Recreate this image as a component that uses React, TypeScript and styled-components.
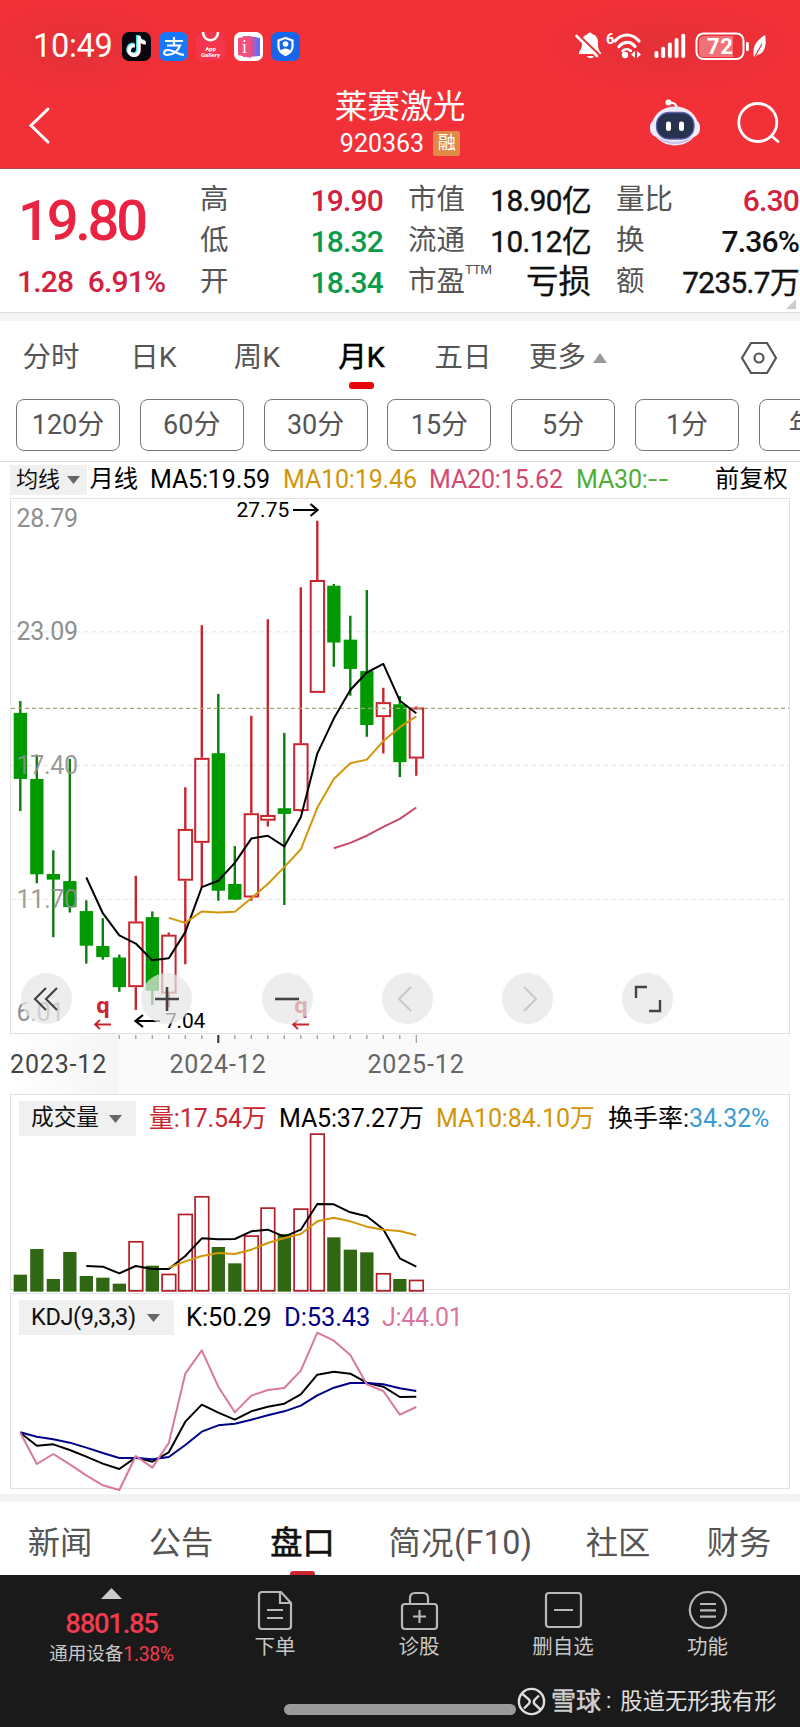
import React from "react";
import styled, { createGlobalStyle } from "styled-components";
import { FaTiktok } from "react-icons/fa6";

const RED = "#c9252f";
const GREEN = "#009a00";
const GOLD = "#d2960a";
const PINK = "#d9789f";

const Global = createGlobalStyle`
  * { box-sizing: border-box; }
  body {
    margin: 0;
    background: #fff;
    font-family: Roboto, "Noto Sans CJK SC", sans-serif;
    color: #111;
  }
  svg { display: block; overflow: visible; }
`;

const Screen = styled.div`
  width: 800px;
  height: 1727px;
  display: flex;
  flex-direction: column;
  overflow: hidden;
  background: #fff;
`;

const Txt = styled.span<{ $size: number; $color?: string; $ls?: number; $weight?: number; $stroke?: number }>`
  font-size: ${(p) => p.$size}px;
  color: ${(p) => p.$color ?? "inherit"};
  letter-spacing: ${(p) => p.$ls ?? 0}px;
  font-weight: ${(p) => p.$weight ?? 400};
  -webkit-text-stroke: ${(p) => p.$stroke ?? 0}px currentColor;
  line-height: 1;
  white-space: nowrap;
`;

/* ---------- header ---------- */

const Header = styled.header`
  height: 169px;
  flex: none;
  color: #fff;
  border-bottom: 1px solid #b5474c;
  background:
    radial-gradient(ellipse 100px 48px at 76px 47px, rgba(150, 50, 50, 0.16), transparent),
    radial-gradient(ellipse 130px 48px at 668px 47px, rgba(150, 50, 50, 0.16), transparent),
    #f23038;
`;

const StatusBar = styled.div`
  height: 84px;
  display: flex;
  align-items: center;
  padding: 9px 33px 0 33px;
`;

const Clock = styled(Txt)`
  width: 89px;
`;

const AppIcons = styled.div`
  display: flex;
  gap: 8.2px;
`;

const AppIcon = styled.div<{ $bg: string }>`
  width: 29px;
  height: 29px;
  border-radius: 7px;
  background: ${(p) => p.$bg};
  display: flex;
  align-items: center;
  justify-content: center;
  overflow: hidden;
`;

const TikTok = styled(FaTiktok)`
  width: 19px;
  height: 21px;
  filter: drop-shadow(-0.8px -0.5px 0 #25f4ee) drop-shadow(0.8px 0.5px 0 #fe2c55);
`;

const StatusIcons = styled.div`
  margin-left: auto;
`;

const TitleBar = styled.div`
  display: grid;
  grid-template-columns: 300px 200px 300px;
  height: 83px;
`;

const BackSlot = styled.div`
  padding: 23px 0 0 28px;
`;

const TitleBlock = styled.div`
  display: flex;
  flex-direction: column;
  align-items: center;
  padding-top: 7px;
`;

const CodeRow = styled.div`
  display: flex;
  align-items: center;
  gap: 9px;
  margin-top: 7px;
`;

const MarginBadge = styled.span`
  width: 27px;
  height: 25px;
  border-radius: 2px;
  background: #e08a45;
  font-size: 18px;
  line-height: 24px;
  text-align: center;
`;

const HeaderActions = styled.div`
  display: flex;
  justify-content: flex-end;
  gap: 36px;
  padding: 14px 20px 0 0;
`;

/* ---------- quote ---------- */

const Quote = styled.section`
  height: 144px;
  flex: none;
  display: grid;
  grid-template-columns: 200px 183px 25px 183px 25px 183px;
  padding-top: 11px;
  border-bottom: 1px solid #dcdcdc;
  position: relative;
`;

const PriceBlock = styled.div`
  display: flex;
  flex-direction: column;
  padding: 13px 0 0 18px;
`;

const ChangeRow = styled.div`
  display: flex;
  gap: 14.5px;
  margin: 18px 0 0 -1px;
`;

const StatColumn = styled.div`
  display: flex;
  flex-direction: column;
`;

const StatRow = styled.div`
  height: 41px;
  display: flex;
  justify-content: space-between;
  align-items: center;
`;

const StatLabel = styled.span`
  font-size: 28.5px;
  line-height: 1;
  color: #555;
  white-space: nowrap;
  sup {
    font-size: 13.5px;
    line-height: 0;
    vertical-align: 17px;
    letter-spacing: -0.5px;
  }
`;

const StatValue = styled(Txt).attrs({ $size: 30, $weight: 500 })`
  letter-spacing: -0.8px;
`;

const StatAmount = styled(Txt).attrs({ $size: 29.7, $stroke: 0.4 })`
  letter-spacing: -0.6px;
`;

const Corner = styled.svg`
  position: absolute;
  right: 4px;
  bottom: 3px;
`;

const Band = styled.div<{ $mt?: number }>`
  height: 8px;
  margin-top: ${(p) => p.$mt ?? 0}px;
  flex: none;
  background: #f3f3f3;
`;

/* ---------- period selectors ---------- */

const PeriodTabs = styled.nav`
  height: 77px;
  flex: none;
  display: grid;
  grid-template-columns: 102px 103px 104px 105px 98px 229px 59px;
  align-items: start;
`;

const Tab = styled.div<{ $active?: boolean; $start?: number }>`
  display: flex;
  align-items: center;
  justify-content: ${(p) => (p.$start === undefined ? "center" : "flex-start")};
  padding-left: ${(p) => p.$start ?? 0}px;
  gap: 7px;
  height: 74px;
  font-size: 28.5px;
  line-height: 1;
  color: ${(p) => (p.$active ? "#000" : "#555")};
  -webkit-text-stroke: ${(p) => (p.$active ? 0.6 : 0)}px currentColor;
  position: relative;
`;

const Underline = styled.i<{ $bottom: number; $color: string }>`
  position: absolute;
  left: 50%;
  margin-left: -13px;
  bottom: ${(p) => p.$bottom}px;
  width: 25px;
  height: 7px;
  border-radius: 3px;
  background: ${(p) => p.$color};
`;

const Minutes = styled.div`
  height: 64px;
  flex: none;
  display: flex;
  gap: 19.8px;
  padding: 1px 0 0 16px;
  overflow: hidden;
  border-bottom: 1px solid #ddd;
`;

const MinuteButton = styled.button`
  width: 104px;
  height: 52px;
  flex: none;
  padding: 0;
  border: 1px solid #777;
  border-radius: 8px;
  background: #fff;
  color: #555;
  font: 27px/50px Roboto, "Noto Sans CJK SC", sans-serif;
  letter-spacing: 0;
  text-align: center;
`;

const Legend = styled.div`
  height: 36px;
  flex: none;
  display: flex;
  align-items: center;
  padding: 0 11px 1px 10px;
`;

const Picker = styled.div<{ $w: number; $h: number; $pad: number; $gap: number }>`
  width: ${(p) => p.$w}px;
  height: ${(p) => p.$h}px;
  padding-left: ${(p) => p.$pad}px;
  display: flex;
  align-items: center;
  gap: ${(p) => p.$gap}px;
  background: #f0f0f0;
`;

const Slot = styled.div<{ $w: number }>`
  width: ${(p) => p.$w}px;
  flex: none;
  display: flex;
`;

const Reading = styled(Txt).attrs({ $size: 25 })`
  letter-spacing: -0.15px;
`;

const Dashes = styled.span`
  display: inline-block;
  letter-spacing: 1px;
  transform: scaleX(1.35);
  transform-origin: left;
`;

/* ---------- charts ---------- */

const Panel = styled.section<{ $h: number; $mt?: number }>`
  height: ${(p) => p.$h}px;
  flex: none;
  margin: ${(p) => p.$mt ?? 0}px 10px 0;
  border: 1px solid #e2e2e2;
  position: relative;
`;

const Plot = styled.svg`
  position: absolute;
  left: -11px;
  top: -1px;
`;

const PanelLegend = styled.div`
  display: flex;
  align-items: center;
  padding: 6px 0 0 8px;
`;

const ChartControls = styled.div`
  position: absolute;
  left: 10px;
  bottom: 9px;
  display: flex;
  gap: 69.3px;
`;

const RoundButton = styled.button`
  width: 51px;
  height: 51px;
  padding: 0;
  border: 0;
  border-radius: 50%;
  background: rgba(230, 230, 230, 0.72);
  display: flex;
  align-items: center;
  justify-content: center;
`;

const Axis = styled.div`
  height: 60px;
  flex: none;
  margin: 0 10px;
  background: linear-gradient(90deg, #fff, #f5f5f5 108px, #fafafa 109px);
  display: grid;
  grid-template-rows: 12px 1fr;
`;

const AxisLabels = styled.div`
  display: grid;
  grid-template-columns: 109px 198px 198px;
  padding-top: 6px;
`;

const AxisLabel = styled(Txt).attrs({ $size: 25 })<{ $mid?: boolean }>`
  letter-spacing: 0.85px;
  text-align: ${(p) => (p.$mid ? "center" : "left")};
`;

/* ---------- bottom ---------- */

const InfoTabs = styled.nav`
  height: 73px;
  flex: none;
  display: grid;
  grid-template-columns: 120px 122px 121px 195px 120px 122px;
  overflow: hidden;
`;

const InfoTab = styled.div<{ $active?: boolean; $ls?: number }>`
  display: flex;
  align-items: center;
  justify-content: center;
  height: 83px;
  font-size: 32.3px;
  letter-spacing: ${(p) => p.$ls ?? 0}px;
  line-height: 1;
  white-space: nowrap;
  color: ${(p) => (p.$active ? "#111" : "#555")};
  -webkit-text-stroke: ${(p) => (p.$active ? 0.6 : 0)}px currentColor;
  position: relative;
`;

const Footer = styled.footer`
  height: 152px;
  flex: none;
  background: #1a1a1a;
  color: #c8c8c8;
  display: flex;
  flex-direction: column;
`;

const Actions = styled.div`
  display: grid;
  grid-template-columns: 203px 144px 144px 144px 145px;
  height: 110px;
`;

const Action = styled.div`
  display: flex;
  flex-direction: column;
  align-items: center;
  padding-top: 15px;
  gap: 6px;
`;

const IndexBlock = styled.div`
  display: flex;
  flex-direction: column;
  align-items: center;
  padding: 13px 0 0 20px;
`;

const IndexLine = styled.div<{ $mt: number }>`
  display: flex;
  align-items: center;
  margin-top: ${(p) => p.$mt}px;
`;

const HomeRow = styled.div`
  display: flex;
  align-items: center;
  padding-left: 284px;
  height: 32px;
`;

const HomePill = styled.div`
  width: 232px;
  height: 11px;
  margin-top: 17px;
  border-radius: 6px;
  background: #9a9a9a;
`;

const Watermark = styled.div`
  display: flex;
  align-items: center;
  margin-left: 1px;
`;

/* ---------- data: one entry per month ---------- */

const X0 = 20.3;
const STEP = 16.5;
const xAt = (i: number) => X0 + i * STEP;

type Candle = [up: 0 | 1, high: number, top: number, bottom: number, low: number];

const candles: Candle[] = [
  [0, 591, 624, 809, 899], [0, 741, 809, 1076, 1101], [0, 1009, 1075, 1091, 1252],
  [0, 753, 1095, 1168, 1183], [0, 1149, 1179, 1276, 1326], [0, 1199, 1277, 1308, 1315],
  [0, 1301, 1309, 1392, 1405], [1, 1080, 1208, 1392, 1456], [0, 1180, 1196, 1402, 1442],
  [1, 1239, 1245, 1410, 1448], [1, 832, 949, 1094, 1328], [1, 379, 750, 988, 1112],
  [0, 571, 737, 1122, 1150], [0, 997, 1103, 1147, 1147], [1, 632, 905, 1141, 1150],
  [1, 362, 910, 926, 942], [0, 680, 891, 907, 1162], [1, 272, 709, 899, 901],
  [1, 86, 252, 568, 568], [0, 263, 268, 427, 495], [0, 352, 419, 501, 576],
  [0, 280, 507, 658, 691], [1, 554, 594, 636, 738], [0, 577, 600, 762, 804],
  [1, 606, 609, 752, 800],
];
const ma5 = [1085, 1185, 1247, 1270, 1317, 1311, 1238, 1112, 1094, 1044, 976, 968, 998, 916, 738, 640, 560, 511, 487, 590, 625];
const ma10 = [1198, 1212, 1180, 1183, 1181, 1143, 1103, 1056, 1006, 890, 809, 765, 755, 703, 664, 634];
const ma20 = [1003, 988, 968, 943, 921, 889];

const volumes = [554, 477, 567, 486, 558, 563, 581, 453, 527, 551, 371, 318, 471, 520, 436, 352, 432, 355, 130, 442, 479, 487, 549, 567, 569];
const vol5 = [528, 530, 550, 528, 537, 537, 498, 445, 448, 447, 424, 419, 440, 419, 342, 343, 367, 379, 418, 505, 530];
const vol10 = [533, 514, 498, 489, 492, 479, 459, 444, 432, 394, 383, 394, 410, 419, 423, 436];

const kLine = [428, 467, 463, 480, 500, 521, 537, 502, 515, 487, 395, 344, 368, 389, 364, 350, 341, 313, 254, 245, 251, 278, 290, 321, 320];
const dLine = [427, 440, 448, 458, 473, 489, 504, 504, 508, 501, 465, 425, 406, 401, 389, 376, 364, 347, 316, 293, 279, 279, 283, 295, 303];
const jLine = [428, 522, 492, 523, 556, 586, 600, 498, 533, 459, 251, 181, 290, 367, 317, 300, 294, 242, 128, 152, 195, 283, 303, 374, 351];

const priceY = (v: number) => v / 2.8 - 8;
const volumeY = (v: number) => v / 3 - 4;
const kdjY = (v: number) => v / 3 - 3;

const Series = ({ values, from = 0, y, color }: { values: number[]; from?: number; y: (v: number) => number; color: string }) => (
  <polyline
    points={values.map((v, i) => `${xAt(from + i)},${y(v)}`).join(" ")}
    fill="none"
    stroke={color}
    strokeWidth={2}
    strokeLinejoin="round"
  />
);

const Caret = ({ up, w = 13, h = 8, color = "#666" }: { up?: boolean; w?: number; h?: number; color?: string }) => (
  <svg width={w} height={h}>
    <path d={up ? `M0 ${h}H${w}L${w / 2} 0Z` : `M0 0H${w}L${w / 2} ${h}Z`} fill={color} />
  </svg>
);

const PriceChart = () => (
  <Plot width={800} height={535}>
    {[133.8, 267.4, 401.3].map((y) => (
      <line key={y} x1={11} x2={789} y1={y} y2={y} stroke="#e4e4e4" strokeDasharray="5 3" />
    ))}
    {candles.map(([up, high, top, bottom, low], i) => {
      const x = xAt(i);
      return up ? (
        <g key={i} stroke={RED} strokeWidth={2.4} fill="none">
          <path d={`M${x} ${priceY(high)}V${priceY(top)}M${x} ${priceY(bottom)}V${priceY(low)}`} />
          <rect x={x - 6.6} y={priceY(top) + 1} width={13.4} height={priceY(bottom) - priceY(top) - 2} strokeWidth={2} />
        </g>
      ) : (
        <g key={i} fill={GREEN}>
          <rect x={x - 1.2} y={priceY(high)} width={2.4} height={priceY(low) - priceY(high)} fill="#0a7f0a" />
          <rect x={x - 6.6} y={priceY(top)} width={13.3} height={priceY(bottom) - priceY(top)} />
        </g>
      );
    })}
    <line x1={11} x2={789} y1={210.4} y2={210.4} stroke="#a9a274" strokeWidth={1.2} strokeDasharray="4 3" />
    <Series values={ma20} from={19} y={priceY} color="#c94a66" />
    <Series values={ma5} from={4} y={priceY} color="#000" />
    <Series values={ma10} from={9} y={priceY} color={GOLD} />
    <g fontSize={25} fill="#8f8f8f" letterSpacing={-0.3}>
      <text x={16.5} y={29}>28.79</text>
      <text x={16.5} y={142}>23.09</text>
      <text x={16.5} y={276} fillOpacity={0.9}>17.40</text>
      <text x={16.5} y={409.5} fillOpacity={0.9}>11.70</text>
      <text x={16.5} y={522.5}>6.01</text>
    </g>
    <g fontSize={21} fill="#000">
      <text x={236.5} y={19}>27.75</text>
      <text x={165} y={530} letterSpacing={-0.2}>7.04</text>
    </g>
    <g stroke="#000" strokeWidth={2.2} fill="none">
      <path d="M293 12H317M310.500 6L317.500 12L310.500 18" />
      <path d="M160 523H136M143 517L135.500 523L143 529" />
    </g>
    {[94, 292].map((x) => (
      <g key={x} fill={RED} stroke="none">
        <text x={x + 2} y={515} fontSize={22} fontWeight={700} fontFamily="Noto Sans">q</text>
        <path d={`M${x + 17} 526.500H${x + 1}M${x + 6} 522L${x + 1} 526.500L${x + 6} 531`} stroke={RED} strokeWidth={1.8} fill="none" />
      </g>
    ))}
  </Plot>
);

const VolumeChart = () => (
  <Plot width={800} height={200}>
    {volumes.map((v, i) => {
      const top = volumeY(v);
      const bottom = volumeY(605);
      return candles[i][0] ? (
        <rect key={i} x={xAt(i) - 6.7} y={top + 0.8} width={13.6} height={bottom - top - 1.6} fill="none" stroke="#b01e28" strokeWidth={1.7} />
      ) : (
        <rect key={i} x={xAt(i) - 6.6} y={top} width={13.3} height={bottom - top} fill="#2f6712" />
      );
    })}
    <Series values={vol5} from={4} y={volumeY} color="#000" />
    <Series values={vol10} from={9} y={volumeY} color={GOLD} />
  </Plot>
);

const KdjChart = () => (
  <Plot width={800} height={200}>
    <Series values={kLine} y={kdjY} color="#000" />
    <Series values={dLine} y={kdjY} color="#00008b" />
    <Series values={jLine} y={kdjY} color={PINK} />
  </Plot>
);

const controlIcons = [
  <path key="a" d="M-1 -11L-12 0L-1 11M10 -11L-1 0L10 11" stroke="#444" strokeWidth={2.2} />,
  <path key="b" d="M-12 0H12M0 -12V12" stroke="#444" strokeWidth={2.6} />,
  <path key="c" d="M-12 0H12" stroke="#444" strokeWidth={2.6} />,
  <path key="d" d="M4 -12L-8 0L4 12" stroke="#c8c8c8" strokeWidth={2} />,
  <path key="e" d="M-4 -12L8 0L-4 12" stroke="#c8c8c8" strokeWidth={2} />,
  <path key="f" d="M-12 -1V-12H-1M1 12H12V1" stroke="#444" strokeWidth={2.4} />,
];

const Signals = () => (
  <svg width={192} height={32} viewBox="0 0 192 32" fill="#fff">
    <path d="M4 21C7 18 7 15 7 11C7 6 10 4 13 3C14 1 16 1 17 3C21 4 23 7 23 11C23 16 23 18 26 22V23H4Z" />
    <path d="M12 25H19C18 28 13 28 12 25Z" />
    <path d="M2 2.500L24 23.500" stroke="#ec3037" strokeWidth={2.200} />
    <path d="M1.500 5L22 25" stroke="#fff" strokeWidth={2.600} strokeLinecap="round" />
    <text x={31} y={12.5} fontSize={14.5} fontWeight={700}>6</text>
    <g fill="none" stroke="#fff" strokeWidth={3.2} strokeLinecap="round">
      <path d="M40 10C47 2 57 2 64 10" />
      <path d="M44 15.500C49 10 56 10 60 15.500" />
      <path d="M47.500 20C50 17.500 53.500 17.500 56 20" strokeWidth={2.5} />
    </g>
    <circle cx={50} cy={24} r={3.2} />
    <path d="M60 20V27L56 23.500ZM62 20V27L66 23.500Z" />
    {[0, 1, 2, 3, 4].map((i) => (
      <rect key={i} x={79.5 + i * 6.7} y={20 - i * 4.3} width={3.9} height={7 + i * 4.3} rx={1.8} />
    ))}
    <rect x={121.500} y={2.500} width={47} height={25.500} rx={7} fill="none" stroke="#fff" strokeWidth={2} />
    <path d="M129 5H158V26H129Q124 26 124 21V10Q124 5 129 5Z" fillOpacity={0.32} />
    <text x={132} y={23} fontSize={22} fontWeight={700} letterSpacing={0.6}>72</text>
    <rect x={171} y={11} width={2.800} height={9} rx={1} />
    <path d="M190 4C192 13 190 23 182 24L179 27C178 20 177 12 190 4Z" />
    <path d="M179 27L187 13" stroke="#ec3037" strokeWidth={1.2} />
  </svg>
);

const Robot = () => (
  <svg width={50} height={48} viewBox="0 0 50 48">
    <path d="M18 5C24 4 27 6 27 12" stroke="#fff" strokeWidth={2} fill="none" />
    <circle cx={18.500} cy={4.500} r={3} fill="#fff" />
    <rect x={0} y={21} width={50} height={18} rx={8} fill="#f3eefb" />
    <ellipse cx={25} cy={28} rx={23} ry={19.500} fill="#f1ecfc" />
    <path d="M6 37C14 46 36 46 44 37C37 49 13 49 6 37Z" fill="#c9c0f2" />
    <rect x={6.500} y={14.500} width={37.500} height={26.500} rx={12.500} fill="#27324f" stroke="#5b5fae" strokeWidth={1.3} />
    <rect x={16} y={23.500} width={5} height={9.500} rx={2.300} fill="#fff" />
    <rect x={29} y={23.500} width={5} height={9.500} rx={2.300} fill="#fff" />
  </svg>
);

const actions: { label: string; icon: React.ReactNode }[] = [
  { label: "下单", icon: <path d="M6 2H25L35 13V36Q35 39 32 39H6Q3 39 3 36V5Q3 2 6 2ZM24 2V13H35M11 20H27M11 28H27" /> },
  { label: "诊股", icon: <path d="M5 14H34Q37 14 37 17V36Q37 39 34 39H5Q2 39 2 36V17Q2 14 5 14ZM10 14V8Q10 3 15 3H23Q28 3 28 8V14M19.500 20V33M13 26.500H26" /> },
  { label: "删自选", icon: <path d="M5 3H34Q37 3 37 6V34Q37 37 34 37H5Q2 37 2 34V6Q2 3 5 3ZM10 20H29" /> },
  { label: "功能", icon: <path d="M20 2A18 18 0 1 1 19.900 2ZM12 14H28M12 20.300H28M12 26.600H28" /> },
];

export default function App() {
  return (
    <Screen>
      <Global />
      <Header>
        <StatusBar>
          <Clock $size={32.5} $ls={-0.3}>10:49</Clock>
          <AppIcons>
            <AppIcon $bg="#08070d"><TikTok /></AppIcon>
            <AppIcon $bg="#1677ff">
              <svg width={29} height={29} fill="none" stroke="#fff" strokeWidth={2.2}>
                <path d="M6 9H24M15 5V13M8 13.500H21C19 19 14 23 8 23C4 23 4 18 9 18C14 18 18 22 25 23" />
              </svg>
            </AppIcon>
            <AppIcon $bg="#f5354c">
              <svg width={29} height={29} fill="#fff">
                <path d="M7 0C7 11 22 11 22 0" fill="none" stroke="#fff" strokeWidth={2.600} />
                <text x={14.500} y={18.500} fontSize={6} fontWeight={700} textAnchor="middle">App</text>
                <text x={14.500} y={24.500} fontSize={6} fontWeight={700} textAnchor="middle">Gallery</text>
              </svg>
            </AppIcon>
            <AppIcon $bg="#fff">
              <svg width={29} height={29}>
                <path d="M13 4L26 6V24L13 25Z" fill="#6d6bea" />
                <path d="M9 4L22 5V24L9 25Z" fill="#b25bb8" />
                <path d="M4 6L17 4V26L4 23Z" fill="#f4507e" />
                <text x={8} y={21} fontSize={18} fill="#fff" fontFamily="Liberation Serif">i</text>
              </svg>
            </AppIcon>
            <AppIcon $bg="#1765e8">
              <svg width={29} height={29} fill="none" stroke="#fff" strokeWidth={2.200}>
                <path d="M14.500 6L21.500 8.500V14.500C21.500 19 18 21.500 14.500 23C11 21.500 7.500 19 7.500 14.500V8.500Z" />
                <circle cx={14.500} cy={12} r={2.800} fill="#fff" stroke="none" />
                <path d="M9.500 19C11 15.500 18 15.500 19.500 19L14.500 22Z" fill="#fff" stroke="none" />
              </svg>
            </AppIcon>
          </AppIcons>
          <StatusIcons><Signals /></StatusIcons>
        </StatusBar>
        <TitleBar>
          <BackSlot>
            <svg width={22} height={38}><path d="M20 2L3 18.500L20 35" fill="none" stroke="#fff" strokeWidth={3} strokeLinecap="round" /></svg>
          </BackSlot>
          <TitleBlock>
            <Txt $size={32.7}>莱赛激光</Txt>
            <CodeRow>
              <Txt $size={25}>920363</Txt>
              <MarginBadge>融</MarginBadge>
            </CodeRow>
          </TitleBlock>
          <HeaderActions>
            <Robot />
            <svg width={44} height={48}><g fill="none" stroke="#fff" strokeWidth={2.800} strokeLinecap="round"><circle cx={21.800} cy={24.500} r={19} /><path d="M35.500 38L42 43.500" /></g></svg>
          </HeaderActions>
        </TitleBar>
      </Header>

      <Quote>
        <PriceBlock>
          <Txt $size={56} $ls={-3.2} $weight={500} $color="#ea2340">19.80</Txt>
          <ChangeRow>
            <StatValue $color="#d2223f">1.28</StatValue>
            <StatValue $color="#d2223f">6.91%</StatValue>
          </ChangeRow>
        </PriceBlock>
        <StatColumn>
          <StatRow><StatLabel>高</StatLabel><StatValue $color="#d2223f">19.90</StatValue></StatRow>
          <StatRow><StatLabel>低</StatLabel><StatValue $color="#0c9a4b">18.32</StatValue></StatRow>
          <StatRow><StatLabel>开</StatLabel><StatValue $color="#0c9a4b">18.34</StatValue></StatRow>
        </StatColumn>
        <span />
        <StatColumn>
          <StatRow><StatLabel>市值</StatLabel><StatAmount>18.90亿</StatAmount></StatRow>
          <StatRow><StatLabel>流通</StatLabel><StatAmount>10.12亿</StatAmount></StatRow>
          <StatRow><StatLabel>市盈<sup>TTM</sup></StatLabel><Txt $size={32.5} $stroke={0.3}>亏损</Txt></StatRow>
        </StatColumn>
        <span />
        <StatColumn>
          <StatRow><StatLabel>量比</StatLabel><StatValue $color="#d2223f">6.30</StatValue></StatRow>
          <StatRow><StatLabel>换</StatLabel><StatValue>7.36%</StatValue></StatRow>
          <StatRow><StatLabel>额</StatLabel><StatAmount>7235.7万</StatAmount></StatRow>
        </StatColumn>
        <Corner width={10} height={10}><path d="M0 10H10V0Z" fill="#ccc" /></Corner>
      </Quote>
      <Band />

      <PeriodTabs>
        <Tab>分时</Tab>
        <Tab>日K</Tab>
        <Tab>周K</Tab>
        <Tab $active>月K<Underline $bottom={6} $color="#e8060b" /></Tab>
        <Tab>五日</Tab>
        <Tab $start={17}>更多<Caret up w={14} h={10} color="#999" /></Tab>
        <Tab $start={0}>
          <svg width={36} height={34} fill="none" stroke="#555" strokeWidth={2.2}>
            <path d="M10 2H26L35 17L26 32H10L1 17Z" /><circle cx={18} cy={17} r={4.500} />
          </svg>
        </Tab>
      </PeriodTabs>
      <Minutes>
        {["120分", "60分", "30分", "15分", "5分", "1分", "年K"].map((m) => (
          <MinuteButton key={m}>{m}</MinuteButton>
        ))}
      </Minutes>

      <Legend>
        <Picker $w={77} $h={30} $pad={6} $gap={7}><Txt $size={22}>均线</Txt><Caret /></Picker>
        <Slot $w={63}><Txt $size={24.3} $color="#000">&#8202;月线</Txt></Slot>
        <Slot $w={133}><Reading $color="#000">MA5:19.59</Reading></Slot>
        <Slot $w={146}><Reading $color={GOLD}>MA10:19.46</Reading></Slot>
        <Slot $w={147}><Reading $color="#d14a6f">MA20:15.62</Reading></Slot>
        <Slot $w={139}><Reading $color="#4dae35">MA30:<Dashes>--</Dashes></Reading></Slot>
        <Txt $size={24.3} $color="#000">前复权</Txt>
      </Legend>

      <Panel $h={536}>
        <PriceChart />
        <ChartControls>
          {controlIcons.map((icon, i) => (
            <RoundButton key={i}><svg width={30} height={30} viewBox="-15 -15 30 30" fill="none">{icon}</svg></RoundButton>
          ))}
        </ChartControls>
      </Panel>
      <Axis>
        <svg width={780} height={12}>
          {Array.from({ length: 19 }, (_, k) => k + 6).map((i) => (
            <line key={i} x1={xAt(i) - 10} x2={xAt(i) - 10} y1={1} y2={i % 12 ? 5 : 9} stroke={i === 12 ? "#333" : "#999"} strokeWidth={i === 12 ? 2 : 1.200} />
          ))}
        </svg>
        <AxisLabels>
          <AxisLabel $color="#444">2023-12</AxisLabel>
          <AxisLabel $mid $color="#666">2024-12</AxisLabel>
          <AxisLabel $mid $color="#666">2025-12</AxisLabel>
        </AxisLabels>
      </Axis>

      <Panel $h={196}>
        <VolumeChart />
        <PanelLegend>
          <Picker $w={117} $h={35} $pad={12} $gap={10}><Txt $size={22.7}>成交量</Txt><Caret /></Picker>
          <Slot $w={13} />
          <Slot $w={130}><Reading $color={RED}>量:17.54万</Reading></Slot>
          <Slot $w={157}><Reading $color="#000">MA5:37.27万</Reading></Slot>
          <Slot $w={172}><Reading $color={GOLD}>MA10:84.10万</Reading></Slot>
          <Txt $size={25} $color="#000">换手率:</Txt>
          <Reading $color="#3d9bd3">34.32%</Reading>
        </PanelLegend>
      </Panel>
      <Panel $h={196} $mt={3}>
        <KdjChart />
        <PanelLegend>
          <Picker $w={155} $h={35} $pad={12} $gap={11}><Txt $size={23.5} $ls={-0.35}>KDJ(9,3,3)</Txt><Caret /></Picker>
          <Slot $w={12} />
          <Slot $w={98}><Txt $size={25.5} $ls={-0.1} $color="#000">K:50.29</Txt></Slot>
          <Slot $w={98}><Txt $size={25.5} $ls={-0.1} $color="#00008b">D:53.43</Txt></Slot>
          <Txt $size={25} $ls={-0.3} $color={PINK}>J:44.01</Txt>
        </PanelLegend>
      </Panel>
      <Band $mt={5} />

      <InfoTabs>
        <InfoTab>新闻</InfoTab>
        <InfoTab>公告</InfoTab>
        <InfoTab $active>盘口<Underline $bottom={7} $color="#cf2336" /></InfoTab>
        <InfoTab $ls={0.4}>简况(F10)</InfoTab>
        <InfoTab>社区</InfoTab>
        <InfoTab>财务</InfoTab>
      </InfoTabs>

      <Footer>
        <Actions>
          <IndexBlock>
            <Caret up w={21} h={11} color="#ccc" />
            <IndexLine $mt={11}><Txt $size={27.5} $ls={-1.3} $weight={500} $color="#f03a4f">8801.85</Txt></IndexLine>
            <IndexLine $mt={7}><Txt $size={18.5}>通用设备</Txt><Txt $size={19.5} $ls={-0.4} $color="#f03a4f">1.38%</Txt></IndexLine>
          </IndexBlock>
          {actions.map((a) => (
            <Action key={a.label}>
              <svg width={39} height={41} fill="none" stroke="#b8b8b8" strokeWidth={2.200}>{a.icon}</svg>
              <Txt $size={20.500}>{a.label}</Txt>
            </Action>
          ))}
        </Actions>
        <HomeRow>
          <HomePill />
          <Watermark>
            <svg width={29} height={29} fill="none" stroke="#dedede" strokeWidth={2.400}>
              <circle cx={14.500} cy={14.500} r={12.600} />
              <path d="M5 6.500L12 12.500Q13.500 14.500 12 16.500L7 21.500M22 8.500L17.500 13Q16 15 17.500 17L24 23" />
            </svg>
            <Slot $w={5} />
            <Txt $size={25} $stroke={0.5} $color="#d0d0d0">雪球</Txt>
            <Slot $w={5} />
            <Txt $size={22} $color="#e0e0e0">: </Txt>
            <Slot $w={9} />
            <Txt $size={22.300} $color="#e0e0e0">股道无形我有形</Txt>
          </Watermark>
        </HomeRow>
      </Footer>
    </Screen>
  );
}
